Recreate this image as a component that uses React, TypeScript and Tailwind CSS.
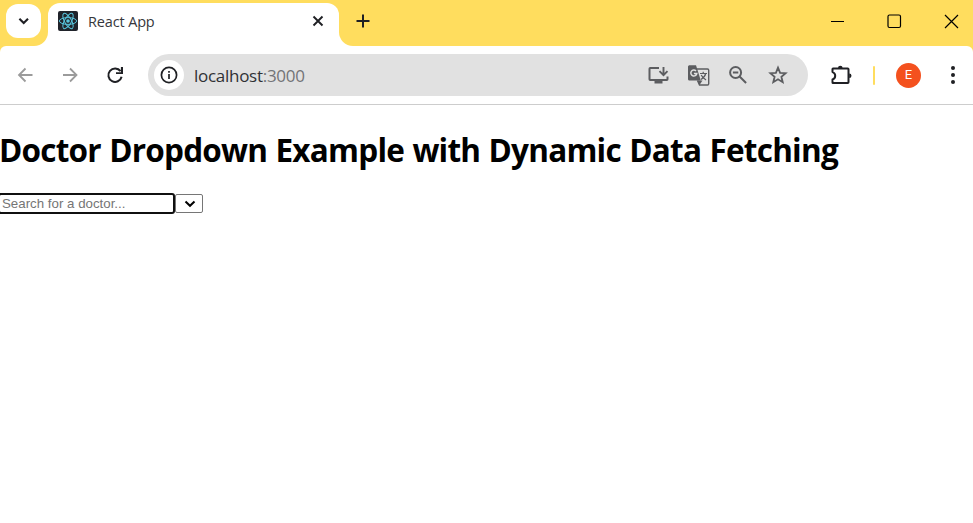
import type { ReactNode } from "react";

function Svg({ w, h, className, children }: { w: number; h: number; className?: string; children: ReactNode }) {
  return (
    <svg width={w} height={h} viewBox={`0 0 ${w} ${h}`} fill="none" stroke="currentColor" className={`shrink-0 ${className ?? ""}`}>
      {children}
    </svg>
  );
}

function ReactLogo() {
  return (
    <Svg w={20} h={20} className="text-[#58c4dc]">
      <rect width="20" height="20" rx="2" fill="#20232a" stroke="none" />
      <g strokeWidth="1">
        <ellipse cx="10" cy="10" rx="8.6" ry="3.4" />
        <ellipse cx="10" cy="10" rx="8.6" ry="3.4" transform="rotate(60 10 10)" />
        <ellipse cx="10" cy="10" rx="8.6" ry="3.4" transform="rotate(120 10 10)" />
      </g>
      <circle cx="10" cy="10" r="1.8" fill="currentColor" stroke="none" />
    </Svg>
  );
}

function TabStrip() {
  return (
    <header className="flex h-[46px] items-end bg-[#ffdd5e]">
      <button aria-label="Search tabs" className="relative z-10 mb-2 ml-1.5 flex h-[34px] w-[35px] items-center justify-center rounded-[12px] bg-white text-[#1f2024]">
        <Svg w={12} h={8}><path d="M1.4 1.7 5.7 6l4.3-4.3" strokeWidth="2.1" /></Svg>
      </button>
      <div className="-ml-[7px] size-3.5 bg-white"><div className="size-full rounded-br-[14px] bg-[#ffdd5e]" /></div>
      <div className="flex h-[43px] w-[290.5px] items-center rounded-t-[12px] bg-white pr-[14.5px] pb-[7px] pl-2.5">
        <ReactLogo />
        <span className="mt-px ml-2.5 whitespace-nowrap font-['Open_Sans','Noto_Sans',sans-serif] text-[14.5px] leading-5 font-normal tracking-[-0.15px] text-[#36373b]">React App</span>
        <Svg w={12} h={12} className="ml-auto text-[#1f2024]"><path d="m1.5 1.5 9 9m0-9-9 9" strokeWidth="1.9" /></Svg>
      </div>
      <div className="size-3.5 bg-white"><div className="size-full rounded-bl-[14px] bg-[#ffdd5e]" /></div>
      <button aria-label="New tab" className="mb-[18px] ml-[3.5px] text-[#1f2024]">
        <Svg w={14} h={14}><path d="M7 .5v13M.5 7h13" strokeWidth="2" /></Svg>
      </button>
      <div className="mr-[14px] mb-[17px] ml-auto flex items-center gap-[42px] text-black">
        <Svg w={14} h={14}><path d="M0 6.5h13" /></Svg>
        <Svg w={15} h={15}><rect x="1" y="1" width="12.5" height="12.5" rx="1.5" strokeWidth="1.2" /></Svg>
        <Svg w={15} h={15}><path d="m1 1 13 13m0-13L1 14" strokeWidth="1.2" /></Svg>
      </div>
    </header>
  );
}

function AddressBar() {
  return (
    <div className="ml-6 flex h-[42px] w-[660px] items-center rounded-full bg-[#e1e1e1] pr-5 pl-1.5 text-[#5c5d60]">
      <div className="flex size-[30px] items-center justify-center rounded-full bg-white text-[#1f2024]">
        <Svg w={18} h={18}>
          <circle cx="9" cy="9" r="7.6" strokeWidth="1.7" />
          <path d="M9 8v5M9 5v1.7" strokeWidth="1.7" />
        </Svg>
      </div>
      <span className="mt-px ml-2.5 whitespace-nowrap font-['Open_Sans','Noto_Sans',sans-serif] text-[17px] leading-6 font-normal tracking-[-0.28px] text-[#303135]">
        localhost<span className="text-[#737477]">:3000</span>
      </span>
      <div className="ml-auto flex items-center gap-[18px]">
        <Svg w={22} h={22}>
          <path d="M11 4H2.2C1.7 4 1.5 4.2 1.5 4.7v10.6c0 .5.2.7.7.7h16.6c.5 0 .7-.2.7-.7V12.5" strokeWidth="2" />
          <path d="M6.5 16h8v3.5h-8z" fill="currentColor" stroke="none" />
          <path d="M15.5 3v8m-4-3.8 4 4 4-4" strokeWidth="1.9" />
        </Svg>
        <Svg w={22} h={22}>
          <path d="M1.8 1.2h6.2l4.8 15.3h-11C.8 16.5 0 16 0 15V2.7C0 1.7.8 1.2 1.8 1.2Z" fill="currentColor" stroke="none" />
          <path d="M8.5 5h11c.8 0 1.2.4 1.2 1.2V19.8c0 .8-.4 1.2-1.2 1.2h-8l-2-4.5" strokeWidth="1.4" />
          <path d="M11.5 21l3-4.5h-5z" fill="currentColor" stroke="none" />
          <path d="M12 9.5h7M15.2 7.8v1.7M17.7 9.5c-.6 2.6-2.5 4.7-4.7 6M13.2 11c1 2.2 3 3.7 4.8 5" strokeWidth="1.2" />
          <path d="M8 6.9a3 3 0 1 0 .8 2.6H5.9" stroke="#e1e1e1" strokeWidth="1.5" />
        </Svg>
        <Svg w={22} h={22}>
          <circle cx="7.6" cy="8.5" r="5.5" strokeWidth="2" />
          <path d="m11.6 12.5 6.5 6.5M4.9 8.5h5.4" strokeWidth="2" />
        </Svg>
        <Svg w={20} h={22}>
          <path d="m10 3.7 2.1 5.1 5.5.4-4.2 3.6 1.3 5.4-4.7-2.9-4.7 2.9 1.3-5.4-4.2-3.6 5.5-.4Z" strokeWidth="1.8" />
        </Svg>
      </div>
    </div>
  );
}

function Toolbar() {
  return (
    <div className="bg-[#ffdd5e]">
      <nav className="flex h-[59px] items-center rounded-t-[6px] border-b border-[#cdcdcd] bg-white text-[#1f2024]">
        <Svg w={16} h={16} className="ml-[17px] text-[#9b9b9b]"><path d="M15.5 8H2m6.5-6.5L2 8l6.5 6.5" strokeWidth="1.8" /></Svg>
        <Svg w={16} h={16} className="ml-[29px] text-[#9b9b9b]"><path d="M1 8H14.5M8 1.5 14.5 8 8 14.5" strokeWidth="1.8" /></Svg>
        <Svg w={18} h={18} className="ml-7">
          <path d="M14.5 5.2A6.7 6.7 0 1 0 15.6 10.7" strokeWidth="2" />
          <path d="M17 1v7h-7V6.3h4.9V1z" fill="currentColor" stroke="none" />
        </Svg>
        <AddressBar />
        <Svg w={22} h={22} className="ml-[22px]">
          <path d="M3 4.5h14.8c.5 0 .7.2.7.7v13.1c0 .5-.2.7-.7.7H3c-.4 0-.5-.2-.5-.5v-3c1.8-.5 2.7-1.8 2.7-3.7s-.9-3.2-2.7-3.7V5c0-.3.1-.5.5-.5Z" strokeWidth="2" strokeLinejoin="round" />
          <path d="M8 4a2.3 2.3 0 0 1 4.6 0ZM19.2 9.5a2.3 2.3 0 0 1 0 4.6Z" fill="currentColor" stroke="none" />
        </Svg>
        <div className="ml-[21px] h-[19px] w-0.5 rounded-full bg-[#ffdd5e]" />
        <div className="ml-[21px] flex size-[25px] items-center justify-center rounded-full bg-[#f4511e] pb-px font-['Roboto',sans-serif] text-[13px] leading-none text-white">E</div>
        <Svg w={6} h={20} className="ml-[29px]">
          <g fill="currentColor" stroke="none"><circle cx="3" cy="3" r="2" /><circle cx="3" cy="10" r="2" /><circle cx="3" cy="17" r="2" /></g>
        </Svg>
      </nav>
    </div>
  );
}

export default function App() {
  return (
    <div className="h-[523px] w-[973px] overflow-hidden bg-white">
      <TabStrip />
      <Toolbar />
      <main className="pt-[23px] text-black">
        <h1 className="-ml-px whitespace-nowrap font-['Open_Sans','Noto_Sans',sans-serif] text-[31.5px] leading-[43px] font-bold tracking-[-0.77px] [word-spacing:0.9px]">Doctor Dropdown Example with Dynamic Data Fetching</h1>
        <div className="mt-[22px] -ml-0.5 flex h-[21px] items-center">
          <input
            placeholder="Search for a doctor..."
            className="h-[21px] w-[177px] rounded-[3px] border-2 border-[#101010] px-0.5 font-['Liberation_Sans',Arial,sans-serif] text-[13.3px] leading-4 outline-none placeholder:text-[#757575]"
          />
          <button aria-label="Show doctors" className="flex h-[19px] w-[28px] items-center justify-center rounded-[2px] border border-[#767676] bg-white pl-[2px]">
            <Svg w={12} h={8}><path d="M1.5 1.5 6 5.8l4.5-4.3" strokeWidth="2" /></Svg>
          </button>
        </div>
      </main>
    </div>
  );
}
